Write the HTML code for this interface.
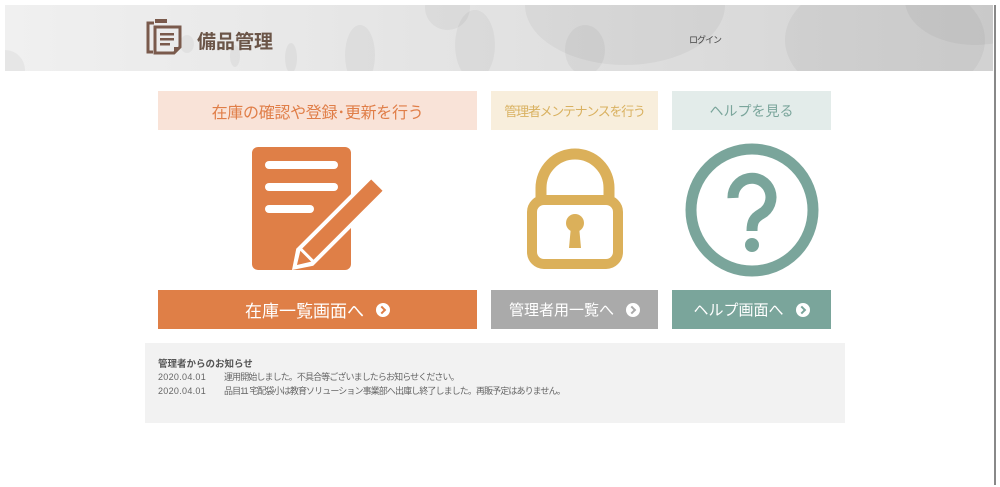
<!DOCTYPE html>
<html><head><meta charset="utf-8"><style>
*{margin:0;padding:0;box-sizing:border-box}
body{width:1000px;height:487px;background:#fff;position:relative;overflow:hidden;font-family:"Liberation Sans","Noto Sans CJK JP",sans-serif}
.hdr{position:absolute;left:5px;top:5px;width:988px;height:66px;background:linear-gradient(90deg,#f0f0f0 0%,#e2e2e2 50%,#d2d2d2 100%);overflow:hidden}
.c{position:absolute;border-radius:50%;background:rgba(0,0,0,0.04)}
.abs{position:absolute}
.lbl{position:absolute;top:91px;height:39px;display:flex;align-items:center;justify-content:center;white-space:nowrap}
.btn{position:absolute;top:290px;height:39px;display:flex;align-items:center;justify-content:center;color:#fff;font-size:17px}
.arr{display:inline-block;width:14px;height:14px;border-radius:50%;background:#fff;margin-left:12px;position:relative}
.arr:after{content:"";position:absolute;left:3px;top:4px;width:4px;height:4px;border-right:2px solid currentColor;border-top:2px solid currentColor;transform:rotate(45deg)}
</style></head><body>
<div class="hdr">
<div class="c" style="left:175px;top:30px;width:14px;height:18px"></div>
<div class="c" style="left:225px;top:40px;width:10px;height:22px"></div>
<div class="c" style="left:280px;top:38px;width:12px;height:30px"></div>
<div class="c" style="left:340px;top:20px;width:30px;height:60px"></div>
<div class="c" style="left:420px;top:-20px;width:45px;height:45px"></div>
<div class="c" style="left:450px;top:5px;width:40px;height:70px"></div>
<div class="c" style="left:520px;top:-60px;width:200px;height:120px"></div>
<div class="c" style="left:560px;top:20px;width:40px;height:50px"></div>
<div class="c" style="left:780px;top:-30px;width:200px;height:130px"></div>
<div class="c" style="left:900px;top:-50px;width:140px;height:90px"></div>
<div class="c" style="left:-20px;top:45px;width:40px;height:40px"></div>
</div>
<div class="abs" style="left:994px;top:5px;width:2px;height:480px;background:#888"></div>
<svg class="abs" style="left:146px;top:19px" width="38" height="36" viewBox="0 0 38 36">
<rect x="9" y="0" width="12" height="4" fill="#7a5a4c"/>
<path d="M8 4H2V33H7" fill="none" stroke="#7a5a4c" stroke-width="3"/>
<path d="M9 8H34V28L28 34H9Z" fill="none" stroke="#7a5a4c" stroke-width="3"/>
<path d="M28 34V28H34Z" fill="#7a5a4c"/>
<rect x="14" y="14" width="14" height="2.5" fill="#7a5a4c"/><rect x="14" y="19" width="14" height="2.5" fill="#7a5a4c"/><rect x="14" y="24" width="10" height="2.5" fill="#7a5a4c"/>
</svg>
<div class="abs" style="left:197px;top:27px;font-size:19px;font-weight:bold;color:#6b5548">備品管理</div>
<div class="abs" style="left:689px;top:33px;font-size:9px;color:#444;letter-spacing:-1px">ログイン</div>

<div class="lbl" style="left:158px;width:319px;background:#f9e3d8;color:#e07e48;font-size:16px;letter-spacing:-0.3px">在庫の確認や登録･更新を行う</div>
<div class="lbl" style="left:491px;width:167px;background:#f8eedc;color:#d9b160;font-size:13px;letter-spacing:-1.3px">管理者メンテナンスを行う</div>
<div class="lbl" style="left:672px;width:159px;background:#e3ecea;color:#7aa59b;font-size:14px">ヘルプを見る</div>

<svg class="abs" style="left:250px;top:145px" width="135" height="127" viewBox="0 0 135 127">
<rect x="2" y="2" width="99" height="123" rx="6" fill="#df7f47"/>
<rect x="15" y="16" width="73" height="8" rx="4" fill="#fff"/>
<rect x="15" y="38" width="73" height="8" rx="4" fill="#fff"/>
<rect x="15" y="60" width="49" height="8" rx="4" fill="#fff"/>
<g transform="translate(42,125) rotate(-45)">
<path d="M0 0L18 -12H124V12H18Z" fill="#fff"/>
<path d="M7 0L20 -8H120V8H20Z" fill="#df7f47"/>
<path d="M21 -9V9" stroke="#fff" stroke-width="3"/>
</g>
</svg>

<svg class="abs" style="left:526px;top:148px" width="98" height="122" viewBox="0 0 98 122">
<path d="M15 50V40A34 34 0 0 1 83 40V50" fill="none" stroke="#dbb05a" stroke-width="11"/>
<rect x="6" y="52" width="86" height="64" rx="12" fill="none" stroke="#dbb05a" stroke-width="10"/>
<circle cx="49" cy="75" r="9" fill="#dbb05a"/>
<path d="M45 78H53L55 100H43Z" fill="#dbb05a"/>
</svg>

<svg class="abs" style="left:685px;top:143px" width="134" height="134" viewBox="0 0 134 134">
<circle cx="67" cy="67" r="61" fill="none" stroke="#7aa59b" stroke-width="11"/>
<path d="M48 55A19 19 0 1 1 76 71C69 75 67 79 67 88" fill="none" stroke="#7aa59b" stroke-width="11"/>
<circle cx="67" cy="102" r="7" fill="#7aa59b"/>
</svg>

<div class="btn" style="left:158px;width:319px;background:#df7f47">在庫一覧画面へ<span class="arr" style="color:#df7f47"></span></div>
<div class="btn" style="left:491px;width:167px;background:#aaaaaa;font-size:15px">管理者用一覧へ<span class="arr" style="color:#aaa"></span></div>
<div class="btn" style="left:672px;width:159px;background:#7aa59b;font-size:15px">ヘルプ画面へ<span class="arr" style="color:#7aa59b"></span></div>

<div class="abs" style="left:145px;top:343px;width:700px;height:80px;background:#f2f2f2"></div>
<div class="abs" style="left:158px;top:356px;font-size:9.5px;font-weight:bold;color:#555">管理者からのお知らせ</div>
<div class="abs" style="left:158px;top:370px;font-size:9px;color:#666;line-height:14px;letter-spacing:0.3px">2020.04.01<br>2020.04.01</div>
<div class="abs" style="left:224px;top:370px;font-size:9px;color:#666;line-height:14px;letter-spacing:-0.9px;white-space:nowrap">運用開始しました。不具合等ございましたらお知らせください。<br>品目11 宅配袋小は教育ソリューション事業部へ出庫し終了しました。再販予定はありません。</div>
</body></html>
